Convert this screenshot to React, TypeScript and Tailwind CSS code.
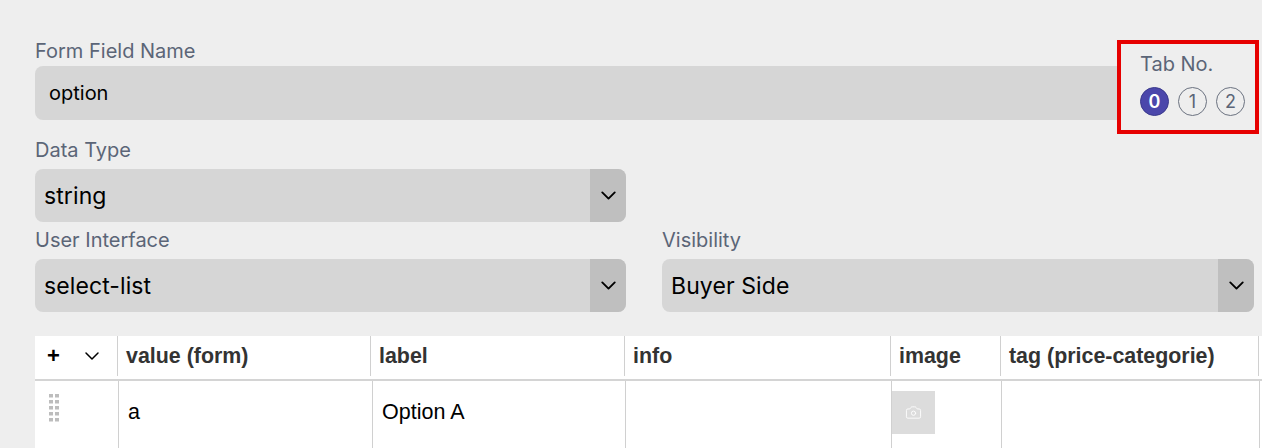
import { ChevronDown, Camera } from "lucide-react";

const headers = [
  { label: "value (form)", width: "w-[253px]" },
  { label: "label", width: "w-[254px]" },
  { label: "info", width: "w-[266px]" },
  { label: "image", width: "w-[110px]" },
  { label: "tag (price-categorie)", width: "w-[258px]" },
];

const SelectBox = ({ value, className = "" }: { value: string; className?: string }) => (
  <div className={`flex h-[53px] items-stretch overflow-hidden rounded-lg bg-[#d6d6d6] ${className}`}>
    <div className="flex flex-1 items-center pl-[9px] pt-[1px] text-[23px] tracking-[0.1px] text-black">{value}</div>
    <div className="flex w-[36px] items-center justify-center bg-[#bfbfbf]">
      <ChevronDown size={25} strokeWidth={1.8} className="text-black" />
    </div>
  </div>
);

const SelectLabel = ({ text }: { text: string }) => (
  <div className="h-[28px] text-[20px] leading-[18px] text-[#5b6577]">{text}</div>
);

const TabCircle = ({ n, active = false }: { n: number; active?: boolean }) => (
  <div
    className={`flex h-[29px] w-[29px] items-center justify-center rounded-full border text-[18px] ${
      active ? "border-[#3a3a8c] bg-[#4b47ab] font-semibold text-white" : "border-[#6b7280] text-[#5b6577]"
    }`}
  >
    {n}
  </div>
);

const GripDots = () => (
  <svg width="12" height="30" viewBox="0 0 12 30" className="fill-[#bdbdbd]">
    {[0, 6, 12, 18, 24].map((y) => (
      <g key={y}>
        <rect x="1" y={y} width="4" height="3.5" />
        <rect x="7" y={y} width="4" height="3.5" />
      </g>
    ))}
  </svg>
);

export default function App() {
  return (
    <div className="h-[448px] w-full overflow-hidden bg-[#eeeeee] pt-[40px] font-['Inter',sans-serif]">
      <div className="flex pl-[35px]">
        <div className="w-[1082px] pt-[2px]">
          <div className="h-[24px] text-[20px] leading-[18px] text-[#5b6577]">Form Field Name</div>
          <div className="flex h-[54px] items-center rounded-l-lg bg-[#d6d6d6] pl-[14px] text-[20px] text-black">
            option
          </div>
        </div>
        <div className="h-[94px] w-[142px] border-4 border-[#e60000] pl-[19px] pt-[11px]">
          <div className="text-[20px] leading-[18px] text-[#5b6577]">Tab No.</div>
          <div className="mt-[14px] flex gap-[9px]">
            <TabCircle n={0} active />
            <TabCircle n={1} />
            <TabCircle n={2} />
          </div>
        </div>
      </div>

      <div className="px-[35px] pt-[7px]">
        <SelectLabel text="Data Type" />
        <SelectBox value="string" className="w-[591px]" />
      </div>

      <div className="flex gap-[36px] pl-[35px] pr-[8px] pt-[9px]">
        <div className="w-[591px]">
          <SelectLabel text="User Interface" />
          <SelectBox value="select-list" />
        </div>
        <div className="w-[592px]">
          <SelectLabel text="Visibility" />
          <SelectBox value="Buyer Side" />
        </div>
      </div>

      <div className="ml-[35px] mt-[24px] font-['Liberation_Sans',sans-serif]">
        <div className="flex h-[43px] bg-white pb-[3px]">
          <div className="flex w-[83px] items-center border-r border-[#d0d0d0] pl-[12px] text-black">
            <span className="w-[33px] text-[22px] font-bold leading-none">+</span>
            <ChevronDown size={24} strokeWidth={1.5} />
          </div>
          {headers.map((h) => (
            <div
              key={h.label}
              className={`flex items-center border-r border-[#d0d0d0] pl-[8px] pt-[1px] text-[21.4px] font-bold text-[#333333] ${h.width}`}
            >
              {h.label}
            </div>
          ))}
        </div>
        <div className="flex h-[69px] border-t-2 border-[#d4d4d4] bg-white text-[21.5px] text-black">
          <div className="w-[84px] border-r border-[#d0d0d0] pl-[13px] pt-[13px]">
            <GripDots />
          </div>
          <div className="w-[254px] border-r border-[#d0d0d0] pl-[9px] pt-[15px]">a</div>
          <div className="w-[253px] border-r border-[#d0d0d0] pl-[9px] pt-[15px]">Option A</div>
          <div className="w-[266px] border-r border-[#d0d0d0]" />
          <div className="w-[110px] border-r border-[#d0d0d0] pt-[10px]">
            <div className="flex h-[43px] w-[43px] items-center justify-center bg-[#dcdcdc]">
              <Camera size={17} strokeWidth={1.25} className="text-white" />
            </div>
          </div>
          <div className="w-[258px] border-r border-[#d0d0d0]" />
        </div>
      </div>
    </div>
  );
}
